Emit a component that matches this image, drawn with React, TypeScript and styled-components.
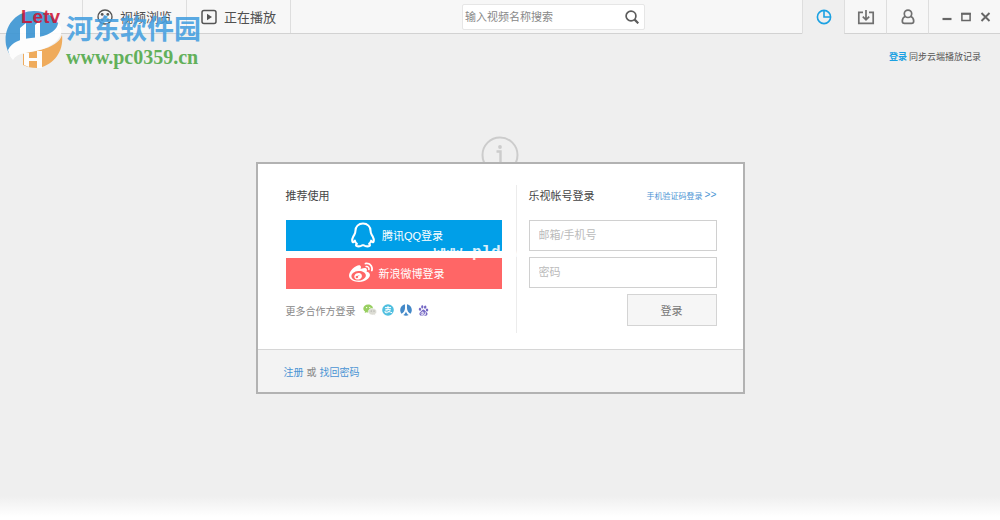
import React from "react";
import styled, { createGlobalStyle } from "styled-components";
import { FaWeibo, FaRenren } from "react-icons/fa";
import { RiBaiduFill } from "react-icons/ri";

const GlobalStyle = createGlobalStyle`
  *, *::before, *::after { box-sizing: border-box; }
  body {
    margin: 0;
    font-family: "Liberation Sans", "Noto Sans CJK SC", sans-serif;
    font-size: 11px;
    color: #555;
  }
  button, input { font: inherit; }
  a { text-decoration: none; }
  svg { display: block; flex: none; }
`;

const Page = styled.div`
  position: relative;
  display: flex;
  flex-direction: column;
  min-height: 100vh;
  background: linear-gradient(to top, #fff 0, #fff 3px, #efefef 24px);
`;

const Header = styled.header`
  display: flex;
  height: 34px;
  background: #f7f7f7;
`;

const Bar = styled.div<{ $grow?: number }>`
  display: flex;
  align-items: center;
  flex: ${(p) => p.$grow ?? 0} 0 auto;
  border-bottom: 1px solid #d2d2d2;
`;

const Logo = styled.a`
  display: flex;
  align-items: center;
  width: 83px;
  height: 100%;
  padding-left: 21px;
  border-right: 1px solid #dedede;
  font-size: 19px;
  font-weight: bold;
  color: #cf1030;
`;

const LogoWord = styled.span`
  position: relative;
  z-index: 2;
  opacity: 0.85;
`;

const NavButton = styled.button`
  display: flex;
  align-items: center;
  gap: 7px;
  height: 100%;
  padding: 0 14px;
  border: 0;
  border-right: 1px solid #dedede;
  background: none;
  font-size: 13px;
  color: #505050;
`;

const SearchBox = styled.form`
  display: flex;
  align-items: center;
  width: 183px;
  height: 26px;
  margin: 0 auto 0 171px;
  padding: 0 5px 0 2px;
  border: 1px solid #e6e6e6;
  border-radius: 2px;
  background: #fff;
`;

const SearchInput = styled.input`
  flex: 1;
  min-width: 0;
  padding: 0;
  border: 0;
  outline: 0;
  background: none;
  &::placeholder { color: #888; opacity: 1; }
`;

const PlainButton = styled.button`
  display: flex;
  align-items: center;
  justify-content: center;
  padding: 0;
  border: 0;
  background: none;
  color: #666;
`;

const ToolTab = styled.button<{ $active?: boolean }>`
  display: flex;
  align-items: center;
  justify-content: center;
  width: 42px;
  padding: 0;
  border: 0;
  border-left: 1px solid #dedede;
  border-bottom: 1px solid ${(p) => (p.$active ? "#efefef" : "#d2d2d2")};
  background: ${(p) => (p.$active ? "#efefef" : "#f7f7f7")};
  color: ${(p) => (p.$active ? "#1ba1e2" : "#707070")};
`;

const WindowControls = styled(Bar)`
  gap: 5px;
  padding: 0 7px 0 11px;
  border-left: 1px solid #dedede;
`;

const Main = styled.main`
  display: flex;
  flex-direction: column;
  align-items: center;
`;

const SyncHint = styled.p`
  align-self: flex-end;
  margin: 16px 19px 0 0;
  font-size: 9px;
  line-height: 14px;
  color: #555;
`;

const Link = styled.a`
  color: #4a94d4;
`;

const HintLink = styled.a`
  margin-right: 2px;
  color: #1ba1e2;
  font-weight: bold;
`;

const InfoMark = styled.div`
  margin-top: 72px;
  height: 26px;
  overflow: hidden;
`;

const Dialog = styled.section`
  position: relative;
  width: 489px;
  max-width: 100%;
  border: 2px solid #b2b2b2;
  background: #fff;
`;

const DialogBody = styled.div`
  display: flex;
  align-items: flex-start;
  padding: 21px 26px 16px 28px;
`;

const Partners = styled.div`
  flex: 216;
  padding-right: 14px;
`;

const Account = styled.form`
  flex: 188;
  min-height: 148px;
  padding-left: 12px;
  border-left: 1px solid #ececec;
`;

const HeadRow = styled.div`
  display: flex;
  align-items: center;
  justify-content: space-between;
  height: 20px;
  margin-bottom: 15px;
`;

const Title = styled.h2`
  margin: 0;
  font-size: 11px;
  font-weight: normal;
  color: #444;
`;

const PhoneLink = styled(Link)`
  display: flex;
  align-items: center;
  gap: 2px;
  font-size: 8px;
`;

const Chevrons = styled.span`
  font-family: "Liberation Mono", monospace;
  font-size: 10px;
`;

const PartnerButton = styled.button<{ $color: string }>`
  display: flex;
  align-items: center;
  justify-content: center;
  gap: 6px;
  width: 100%;
  height: 31px;
  margin-bottom: 7px;
  padding: 0 0 2px 6px;
  border: 0;
  background: ${(p) => p.$color};
  color: #fff;
`;

const MoreRow = styled.div`
  display: flex;
  align-items: center;
  gap: 6px;
  height: 28px;
  font-size: 10px;
  color: #888;
`;

const MoreLabel = styled.span`
  margin-right: 2px;
`;

const SmallIcon = styled.a<{ $color?: string }>`
  display: flex;
  justify-content: center;
  width: 12px;
  color: ${(p) => p.$color ?? "inherit"};
`;

const Field = styled.input`
  position: relative;
  z-index: 1;
  display: block;
  width: 100%;
  height: 31px;
  margin-bottom: 6px;
  padding: 0 9px 2px;
  border: 1px solid #d0d0d0;
  border-radius: 0;
  outline: 0;
  background: transparent;
  &::placeholder { color: #bbb; opacity: 1; }
`;

const Submit = styled.button`
  display: block;
  width: 90px;
  height: 32px;
  margin-left: auto;
  padding: 0;
  border: 1px solid #d4d4d4;
  background: #f6f6f6;
  color: #777;
`;

const DialogFoot = styled.footer`
  display: flex;
  align-items: center;
  gap: 3px;
  height: 43px;
  padding-left: 26px;
  border-top: 1px solid #d6d6d6;
  background: #f3f3f3;
  font-size: 10px;
  color: #888;
`;

const DialogStamp = styled.span`
  position: absolute;
  left: 176px;
  top: 80px;
  font: bold 16px/18px "Liberation Mono", monospace;
  color: #fff;
  opacity: 0.85;
  pointer-events: none;
`;

const SiteStamp = styled.div`
  position: absolute;
  z-index: 1;
  left: 5px;
  top: 11px;
  display: flex;
  gap: 3px;
  pointer-events: none;
`;

const StampText = styled.div`
  display: flex;
  flex-direction: column;
  font-family: "Liberation Serif", "Noto Sans CJK SC", serif;
  font-weight: bold;
`;

const StampName = styled.span`
  font-size: 27px;
  line-height: 38px;
  color: #459fe0;
  opacity: 0.88;
`;

const StampUrl = styled.span`
  font-size: 20px;
  line-height: 16px;
  color: #62b05a;
`;

const ReelIcon = () => (
  <svg width="16" height="16" viewBox="0 0 16 16" fill="none" stroke="#555" strokeWidth="1.4">
    <circle cx="8" cy="8" r="7" />
    <g fill="#555" stroke="none">
      <circle cx="5.2" cy="5.4" r="1.4" />
      <circle cx="10.8" cy="5.4" r="1.4" />
      <circle cx="5.2" cy="10.8" r="1.4" />
      <circle cx="10.8" cy="10.8" r="1.4" />
      <circle cx="8" cy="8" r="0.8" />
    </g>
  </svg>
);

const PlayIcon = () => (
  <svg width="16" height="16" viewBox="0 0 16 16">
    <rect x="1" y="1.5" width="14" height="13" rx="2" fill="none" stroke="#555" strokeWidth="1.5" />
    <path d="M6 4.8 11 8 6 11.2Z" fill="#555" />
  </svg>
);

const SearchIcon = () => (
  <svg width="14" height="14" viewBox="0 0 14 14" fill="none" stroke="#5c5c5c">
    <circle cx="6" cy="6" r="4.9" strokeWidth="1.7" />
    <path d="m9.4 9.400 3.900 3.900" strokeWidth="2.2" />
  </svg>
);

const ClockIcon = () => (
  <svg width="16" height="16" viewBox="0 0 16 16" fill="none" stroke="currentColor" strokeWidth="1.6">
    <circle cx="8" cy="8" r="6.600" />
    <path d="M8 2v6h6" />
  </svg>
);

const DownloadIcon = () => (
  <svg width="18" height="16" viewBox="0 0 18 16" fill="none" stroke="currentColor" strokeWidth="1.7">
    <path d="M6 3.3H1.8v11h14.4v-11H12M9 1v9.4M5.8 7.6 9 10.8l3.2-3.2" />
  </svg>
);

const UserIcon = () => (
  <svg width="14" height="16" viewBox="0 0 14 16" fill="none" stroke="currentColor" strokeWidth="1.7">
    <circle cx="7" cy="4.8" r="3.7" />
    <path d="M4.4 7.3C2.3 8.3 1.3 10 1.3 12c0 1.6.8 2.4 2.2 2.4h7c1.4 0 2.2-.8 2.2-2.4 0-2-1-3.7-3.1-4.7" />
  </svg>
);

const MinimizeIcon = () => (
  <svg width="14" height="14" viewBox="0 0 14 14"><path d="M2.5 9h9" stroke="#666" strokeWidth="2.2" /></svg>
);

const MaximizeIcon = () => (
  <svg width="14" height="14" viewBox="0 0 14 14" fill="none" stroke="#666">
    <rect x="2.900" y="3.700" width="8.200" height="6.800" strokeWidth="1.5" />
    <path d="M2.200 3.7h9.600" strokeWidth="2" />
  </svg>
);

const CloseIcon = () => (
  <svg width="15" height="14" viewBox="0 0 15 14"><path d="m3.500 3 8 8M11.500 3l-8 8" stroke="#666" strokeWidth="1.9" /></svg>
);

const InfoIcon = () => (
  <svg width="38" height="38" viewBox="0 0 38 38" fill="none" stroke="#ccc">
    <circle cx="19" cy="19" r="17.5" strokeWidth="2" />
    <path d="M15.500 15.500h4V28M15 28h9" strokeWidth="2.400" />
    <circle cx="19" cy="11" r="1.900" fill="#ccc" stroke="none" />
  </svg>
);

const QQIcon = () => (
  <svg width="26" height="26" viewBox="0 0 24 24" fill="none" stroke="#fff" strokeWidth="1.9" strokeLinejoin="round">
    <path d="M12 1.4C7.8 1.4 5 4.300 5 8.200c0 1.500-.4 2.500-1.100 3.700-1.400 2.200-2.300 4.500-1.700 6.300.4 1 1.500.1 2.300-1 .3 1.300.9 2.200 1.900 3-1.200.5-1.300 1.900.3 2.200 1.700.3 3.500-.1 4.600-1h1.400c1.100.9 2.900 1.300 4.600 1 1.600-.3 1.500-1.700.3-2.200 1-.8 1.600-1.700 1.900-3 .8 1.100 1.900 2 2.300 1 .6-1.800-.3-4.100-1.700-6.300C19.400 10.700 19 9.700 19 8.200 19 4.300 16.200 1.400 12 1.400Z" />
  </svg>
);

const WechatIcon = () => (
  <svg width="14" height="12" viewBox="0 0 14 12">
    <path d="M5.200.5C2.400.5.3 2.300.3 4.500c0 1.300.7 2.400 1.800 3.100L1.700 9l1.800-.8c.5.200 1.100.2 1.700.2 2.700 0 4.900-1.700 4.900-3.900S7.900.5 5.200.5Z" fill="#98cf61" />
    <path d="M9.500 4.300c-2.300 0-4.200 1.500-4.200 3.400S7.200 11 9.500 11c.5 0 1 0 1.400-.2l1.500.7-.4-1.300c1-.6 1.600-1.500 1.600-2.500 0-1.900-1.800-3.400-4.100-3.400Z" fill="#dcdcd4" stroke="#fff" strokeWidth=".5" />
    <g fill="#fff"><circle cx="3.600" cy="3.600" r=".7" /><circle cx="6.700" cy="3.600" r=".7" /></g>
    <g fill="#888"><circle cx="8.200" cy="7" r=".5" /><circle cx="11" cy="7" r=".5" /></g>
  </svg>
);

const AlipayIcon = () => (
  <svg width="12" height="12" viewBox="0 0 12 12">
    <circle cx="6" cy="6" r="5.800" fill="#4fbfe0" />
    <path d="M3 3.600h6M6 2v3.400M3.400 5.400h5C7.800 7.400 6 9 4 8.800c-1.600-.2-1.500-2 .2-2 1.600 0 3 1.100 6 2" fill="none" stroke="#fff" strokeWidth="1" />
  </svg>
);

const StampLogo = () => (
  <svg width="58" height="57" viewBox="0 0 58 57">
    <g opacity=".92">
      <path d="M1 34C-2 15 11 0 29 0c12 0 21 6 25 14 2 8-7 15-19 17-7 1-14 2-20 5-5 2-8 5-10 8-2-3-3-6-4-10Z" fill="#3f97d4" />
      <path d="M57 24c2 17-9 31-25 33-6 0-10-1-14-3V43c4-2 10-2 17-4 12-3 20-8 22-15Z" fill="#efa650" />
      <path d="M3 39c4-8 12-11 23-12 14-1 26-6 27-15 8 8 2 20-15 26-13 4-26 3-30 11-3-3-4-6-5-10Z" fill="#fff" />
      <path d="M15 17l6-5v17l-6 2ZM30 14l5-5v18l-5 2ZM19 42h5v14l-5-2ZM32 40h5v17h-5ZM24 47h8v3h-8Z" fill="#fff" />
    </g>
  </svg>
);

export default function App() {
  return (
    <>
      <GlobalStyle />
      <Page>
        <Header>
          <Bar $grow={1}>
            <Logo href="#"><LogoWord>Letv</LogoWord></Logo>
            <NavButton type="button"><ReelIcon />视频浏览</NavButton>
            <NavButton type="button"><PlayIcon />正在播放</NavButton>
            <SearchBox role="search">
              <SearchInput aria-label="搜索" placeholder="输入视频名称搜索" />
              <PlainButton type="button" aria-label="搜索"><SearchIcon /></PlainButton>
            </SearchBox>
          </Bar>
          <ToolTab type="button" $active aria-label="播放记录"><ClockIcon /></ToolTab>
          <ToolTab type="button" aria-label="下载"><DownloadIcon /></ToolTab>
          <ToolTab type="button" aria-label="用户"><UserIcon /></ToolTab>
          <WindowControls>
            <PlainButton type="button" aria-label="最小化"><MinimizeIcon /></PlainButton>
            <PlainButton type="button" aria-label="最大化"><MaximizeIcon /></PlainButton>
            <PlainButton type="button" aria-label="关闭"><CloseIcon /></PlainButton>
          </WindowControls>
        </Header>

        <Main>
          <SyncHint><HintLink href="#">登录</HintLink>同步云端播放记录</SyncHint>
          <InfoMark><InfoIcon /></InfoMark>
          <Dialog role="dialog" aria-label="登录">
            <DialogBody>
              <Partners>
                <HeadRow><Title>推荐使用</Title></HeadRow>
                <PartnerButton type="button" $color="#009fe8"><QQIcon />腾讯QQ登录</PartnerButton>
                <PartnerButton type="button" $color="#ff6666"><FaWeibo size={24} />新浪微博登录</PartnerButton>
                <MoreRow>
                  <MoreLabel>更多合作方登录</MoreLabel>
                  <SmallIcon href="#" aria-label="微信"><WechatIcon /></SmallIcon>
                  <SmallIcon href="#" aria-label="支付宝"><AlipayIcon /></SmallIcon>
                  <SmallIcon href="#" aria-label="人人" $color="#4489c8"><FaRenren size={12} /></SmallIcon>
                  <SmallIcon href="#" aria-label="百度" $color="#7568c4"><RiBaiduFill size={13} /></SmallIcon>
                </MoreRow>
              </Partners>
              <Account>
                <HeadRow>
                  <Title>乐视帐号登录</Title>
                  <PhoneLink href="#">手机验证码登录<Chevrons>&gt;&gt;</Chevrons></PhoneLink>
                </HeadRow>
                <Field type="text" aria-label="邮箱/手机号" placeholder="邮箱/手机号" />
                <Field type="password" aria-label="密码" placeholder="密码" />
                <Submit type="button">登录</Submit>
              </Account>
            </DialogBody>
            <DialogFoot>
              <Link href="#">注册</Link>或<Link href="#">找回密码</Link>
            </DialogFoot>
            <DialogStamp>www.pldown.com</DialogStamp>
          </Dialog>
        </Main>

        <SiteStamp>
          <StampLogo />
          <StampText>
            <StampName>河东软件园</StampName>
            <StampUrl>www.pc0359.cn</StampUrl>
          </StampText>
        </SiteStamp>
      </Page>
    </>
  );
}
